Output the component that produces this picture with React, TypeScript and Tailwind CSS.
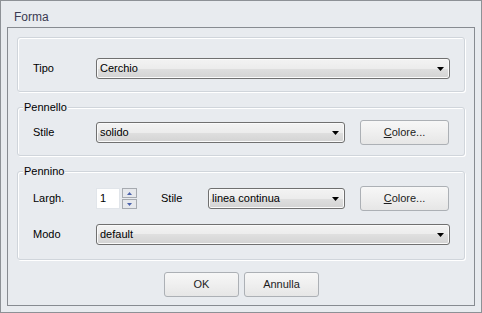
import React from 'react';

const Arrow = () => (
  <svg width="7" height="4" viewBox="0 0 7 4" className="shrink-0">
    <polygon points="0,0 7,0 3.5,4" fill="#000" />
  </svg>
);

const Combo = ({ value, width }: { value: string; width: string }) => (
  <div
    className={`${width} h-[21px] flex items-center justify-between pl-[3px] pr-[5px] border border-[#707070] rounded-[3px] bg-[linear-gradient(to_bottom,#f3f3f3_0%,#ececec_50%,#dfdfdf_50%,#d3d3d3_100%)] shadow-[inset_0_0_0_1px_#fafafa]`}
  >
    <span className="leading-[13px]">{value}</span>
    <Arrow />
  </div>
);

const Button = ({ children, width = 'w-[89px]' }: { children: React.ReactNode; width?: string }) => (
  <button
    className={`${width} h-[25px] flex items-center justify-center border border-[#acb0b5] rounded-[3px] bg-[linear-gradient(to_bottom,#f7f7f7_0%,#efefef_50%,#e6e6e6_100%)] text-[#1c1c1c] leading-[13px]`}
  >
    {children}
  </button>
);

const Group = ({ title, height, children }: { title?: string; height: string; children: React.ReactNode }) => (
  <div
    className={`relative ${height} border border-[#d0d5db] rounded-[3px] shadow-[inset_1px_1px_0_#ffffff,1px_1px_0_#ffffff]`}
  >
    {title && (
      <span className="absolute top-[-7px] left-[5px] px-[1px] leading-[13px] bg-[#e8ebef]">{title}</span>
    )}
    {children}
  </div>
);

export default function App() {
  return (
    <div className="w-[482px] h-[313px] bg-[#e8ebef] border border-[#8d9196] font-['Liberation_Sans',Arial,sans-serif] text-[11px] text-black select-none">
      <div className="h-[26px] pl-[13px] pt-[9px] text-[12px] leading-[14px] text-[#3a3a52]">Forma</div>

      <div className="ml-[6px] w-[468px] h-[279px] border border-[#878b91] px-[9px] pt-[9px]">
        <Group height="h-[55px]">
          <div className="pt-[20px] pl-[15px] flex items-center h-[41px]">
            <span className="w-[63px] leading-[13px]">Tipo</span>
            <Combo value="Cerchio" width="w-[354px]" />
          </div>
        </Group>

        <div className="mt-[15px]">
          <Group title="Pennello" height="h-[49px]">
            <div className="pt-[12px] pl-[15px] flex items-center h-[37px]">
              <span className="w-[63px] leading-[13px]">Stile</span>
              <Combo value="solido" width="w-[249px]" />
              <div className="ml-[15px]">
                <Button>
                  <span>
                    <span className="underline">C</span>olore...
                  </span>
                </Button>
              </div>
            </div>
          </Group>
        </div>

        <div className="mt-[15px]">
          <Group title="Pennino" height="h-[89px]">
            <div className="pt-[14px] pl-[15px]">
              <div className="flex items-center h-[25px]">
                <span className="w-[63px] leading-[13px]">Largh.</span>
                <div className="w-[24px] h-[21px] bg-white border border-[#e1e5ea] pl-[3px] flex items-center leading-[13px]">
                  1
                </div>
                <div className="ml-[2px] w-[15px] flex flex-col gap-[1px]">
                  <div className="h-[10px] border border-[#a6aab0] bg-[#e6e8ec] flex items-center justify-center">
                    <svg width="5" height="3" viewBox="0 0 5 3">
                      <polygon points="2.5,0 5,3 0,3" fill="#4b62ab" />
                    </svg>
                  </div>
                  <div className="h-[10px] border border-[#a6aab0] bg-[#e6e8ec] flex items-center justify-center">
                    <svg width="5" height="3" viewBox="0 0 5 3">
                      <polygon points="0,0 5,0 2.5,3" fill="#4b62ab" />
                    </svg>
                  </div>
                </div>
                <span className="ml-[24px] w-[47px] leading-[13px]">Stile</span>
                <Combo value="linea continua" width="w-[137px]" />
                <div className="ml-[15px]">
                  <Button>
                    <span>
                      <span className="underline">C</span>olore...
                    </span>
                  </Button>
                </div>
              </div>
              <div className="mt-[13px] flex items-center h-[21px]">
                <span className="w-[63px] leading-[13px]">Modo</span>
                <Combo value="default" width="w-[354px]" />
              </div>
            </div>
          </Group>
        </div>

        <div className="mt-[12px] flex justify-center gap-[5px] pl-[1px]">
          <Button width="w-[75px]">OK</Button>
          <Button width="w-[75px]">Annulla</Button>
        </div>
      </div>
    </div>
  );
}
